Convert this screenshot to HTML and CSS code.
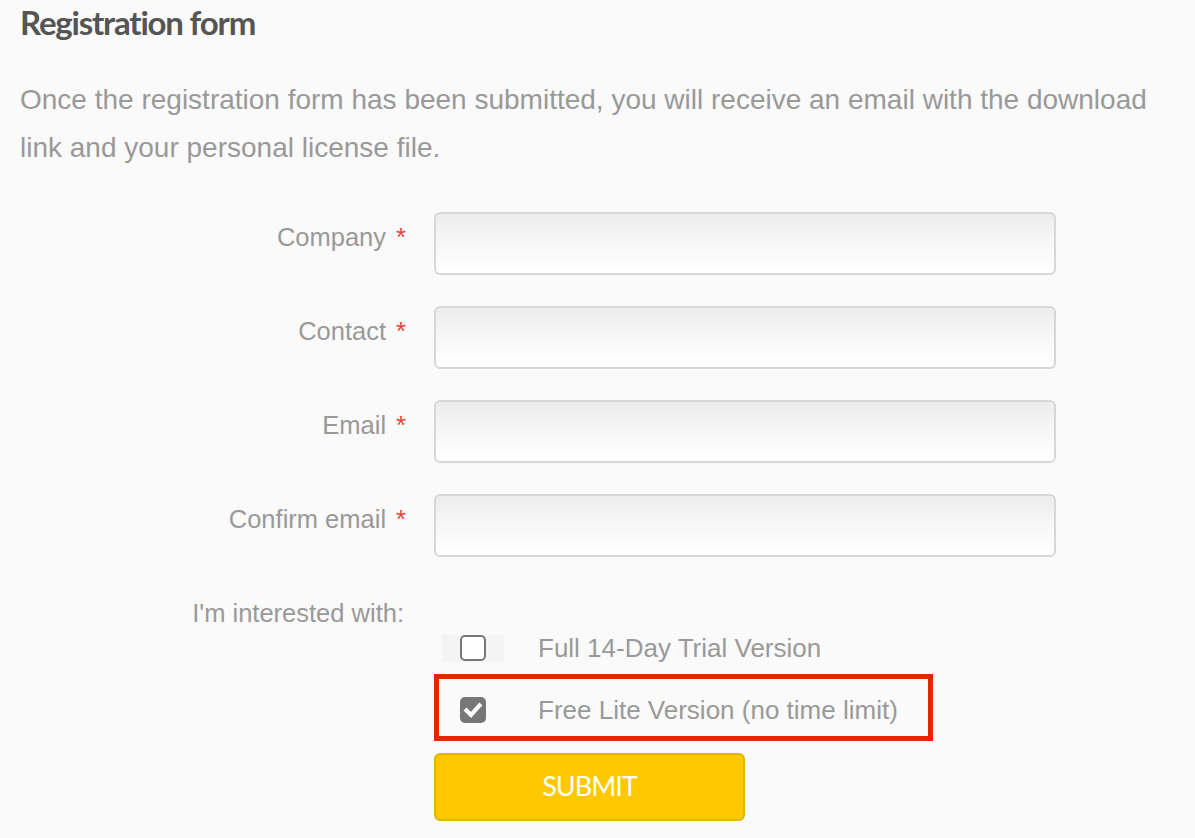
FILE: index.html
```html
<!DOCTYPE html>
<html lang="en">
<head>
<meta charset="utf-8">
<title>Registration form</title>
<link rel="stylesheet" href="styles.css">
</head>
<body>
<main class="page">
  <h1 class="title">Registration form</h1>
  <p class="intro">Once the registration form has been submitted, you will receive an email with the download link and your personal license file.</p>
  <form class="form">
    <label class="label">Company<span class="req">*</span></label>
    <input class="field" type="text">
    <label class="label">Contact<span class="req">*</span></label>
    <input class="field" type="text">
    <label class="label">Email<span class="req">*</span></label>
    <input class="field" type="text">
    <label class="label">Confirm email<span class="req">*</span></label>
    <input class="field" type="text">
    <div class="label label-plain">I'm interested with:</div>
    <div class="options">
      <div class="option">
        <span class="check-wrap"><span class="check"></span></span>
        <span class="option-text">Full 14-Day Trial Version</span>
      </div>
      <div class="option option-highlight">
        <span class="check-wrap"><span class="check check-on"><svg viewBox="0 0 26 26" width="26" height="26"><path d="M6.5 13.5 L11 18 L19.5 8.5" fill="none" stroke="#fff" stroke-width="4.2" stroke-linecap="square" stroke-linejoin="miter"/></svg></span></span>
        <span class="option-text">Free Lite Version (no time limit)</span>
      </div>
      <button class="submit" type="button">SUBMIT</button>
    </div>
  </form>
</main>
</body>
</html>
```

FILE: styles.css
```css
html, body {
  margin: 0;
  padding: 0;
  background: #fafafa;
}

.page {
  padding: 2px 20px 0 20px;
  font-family: "Liberation Sans", Arial, sans-serif;
}

.title {
  margin: 0 0 34px 0;
  font-family: Lato, "Open Sans", sans-serif;
  font-weight: 700;
  font-size: 33px;
  line-height: 40px;
  letter-spacing: -1.2px;
  color: #555555;
}

.intro {
  margin: 0 0 40px 0;
  font-size: 28px;
  line-height: 48px;
  color: #999999;
}

.form {
  display: grid;
  grid-template-columns: 386px 622px;
  column-gap: 28px;
  row-gap: 31px;
}

.label {
  padding-top: 6px;
  text-align: right;
  font-size: 25.5px;
  line-height: 38px;
  color: #999999;
}

.label-plain {
  padding-right: 2px;
}

.req {
  margin-left: 10px;
  color: #e5453a;
}

.field {
  box-sizing: border-box;
  height: 63px;
  width: 622px;
  margin: 0;
  border: 2px solid #d7d7d7;
  border-radius: 6px;
  background: linear-gradient(to bottom, #ececec 0%, #f6f6f6 45%, #ffffff 100%);
  outline: none;
}

.options {
  padding-top: 46px;
  display: flex;
  flex-direction: column;
  align-items: flex-start;
}

.option {
  display: flex;
  align-items: center;
  height: 28px;
  font-size: 26px;
  color: #999999;
}

.check-wrap {
  box-sizing: border-box;
  width: 62px;
  height: 27px;
  margin-left: 8px;
  display: flex;
  align-items: center;
  justify-content: center;
  background: #f4f4f4;
}

.check {
  box-sizing: border-box;
  width: 26px;
  height: 26px;
  border: 2px solid #777777;
  border-radius: 5px;
  background: #ffffff;
  display: block;
}

.check-on {
  border: none;
  background: #777777;
}

.check-on svg {
  display: block;
}

.option-text {
  margin-left: 34px;
  line-height: 28px;
}

.option-highlight {
  box-sizing: border-box;
  margin-top: 12px;
  width: 499px;
  height: 67px;
  border: 5px solid #e42600;
  padding-top: 5px;
}

.option-highlight .check-wrap {
  margin-left: 3px;
  background: transparent;
}

.submit {
  box-sizing: border-box;
  margin-top: 12px;
  width: 311px;
  height: 68px;
  border: 2px solid #e3b500;
  border-radius: 6px;
  background: #ffc800;
  color: #ffffff;
  font-family: Lato, "Open Sans", sans-serif;
  font-size: 27px;
  letter-spacing: -1px;
  padding: 0 0 3px 0;
  cursor: pointer;
}
```
